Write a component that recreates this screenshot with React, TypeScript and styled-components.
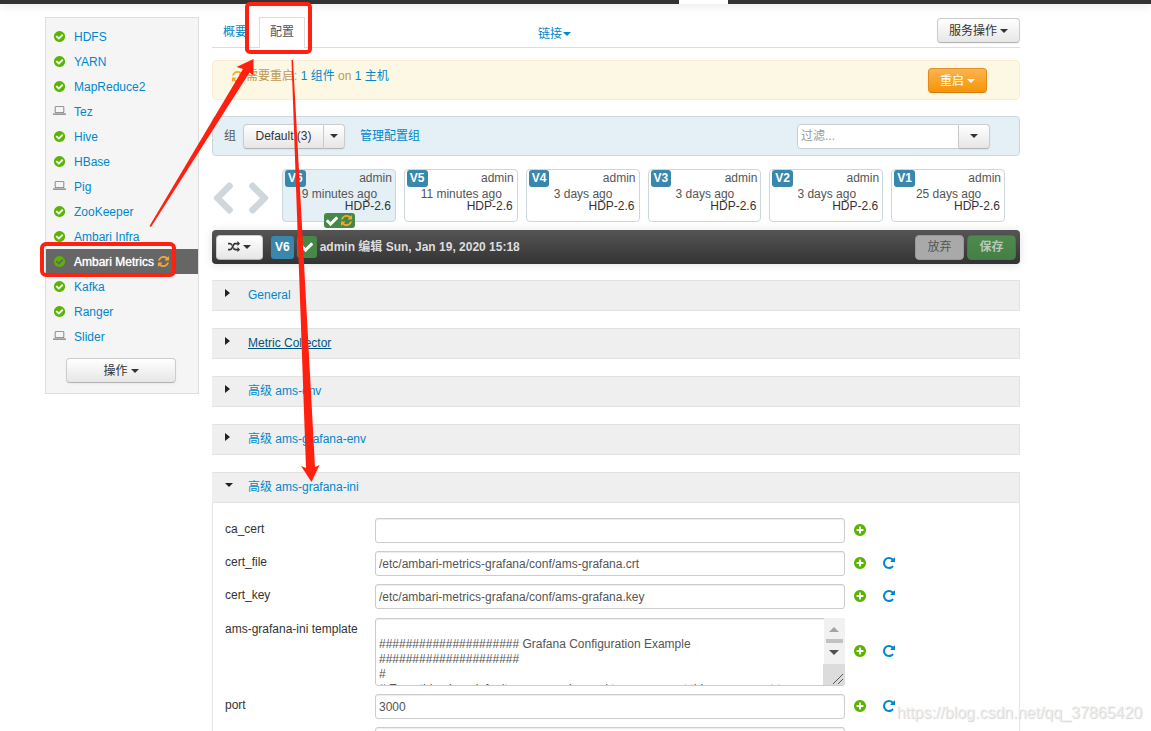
import React from "react";
import styled, { createGlobalStyle, css } from "styled-components";

const GlobalStyle = createGlobalStyle`
  *, *::before, *::after { box-sizing: border-box; }
  body {
    margin: 0;
    background: #fff;
    color: #333;
    font-family: "Liberation Sans", "Noto Sans CJK SC", sans-serif;
    font-size: 12px;
    line-height: 20px;
  }
  button, input, textarea { font: inherit; margin: 0; }
  a { color: #0088cc; text-decoration: none; }
  ul { list-style: none; margin: 0; padding: 0; }
`;

/* ---------- icons ---------- */

const icons = {
  ok: {
    box: "0 0 1792 1792",
    d: "M1412 734q0-28-18-46l-91-90q-19-19-45-19t-45 19l-408 407-226-226q-19-19-45-19t-45 19l-91 90q-18 18-18 46 0 27 18 45l362 362q19 19 45 19 27 0 46-19l543-543q18-18 18-45zm252 162q0 209-103 385.5t-279.5 279.5-385.5 103-385.5-103-279.5-279.5-103-385.5 103-385.5 279.5-279.5 385.5-103 385.5 103 279.5 279.5 103 385.5z",
  },
  plus: {
    box: "0 0 1792 1792",
    d: "M1344 960v-128q0-26-19-45t-45-19h-256v-256q0-26-19-45t-45-19h-128q-26 0-45 19t-19 45v256h-256q-26 0-45 19t-19 45v128q0 26 19 45t45 19h256v256q0 26 19 45t45 19h128q26 0 45-19t19-45v-256h256q26 0 45-19t19-45zm320-64q0 209-103 385.5t-279.5 279.5-385.5 103-385.5-103-279.5-279.5-103-385.5 103-385.5 279.5-279.5 385.5-103 385.5 103 279.5 279.5 103 385.5z",
  },
  refresh: {
    box: "0 0 1792 1792",
    d: "M1639 1056q0 5-1 7-64 268-268 434.5t-478 166.5q-146 0-282.5-55t-243.5-157l-129 129q-19 19-45 19t-45-19-19-45v-448q0-26 19-45t45-19h448q26 0 45 19t19 45-19 45l-137 137q71 66 161 102t187 36q134 0 250-65t186-179q11-17 53-117 8-23 30-23h192q13 0 22.5 9.5t9.5 22.5zm25-800v448q0 26-19 45t-45 19h-448q-26 0-45-19t-19-45 19-45l138-138q-148-137-349-137-134 0-250 65t-186 179q-11 17-53 117-8 23-30 23h-199q-13 0-22.5-9.5t-9.5-22.5v-7q65-268 270-434.5t480-166.5q146 0 284 55.5t245 156.5l130-129q19-19 45-19t45 19 19 45z",
  },
  repeat: {
    box: "0 0 1792 1792",
    d: "M1664 256v448q0 26-19 45t-45 19h-448q-42 0-59-40-17-39 14-69l138-138q-148-137-349-137-104 0-198.5 40.5t-163.5 109.5-109.5 163.5-40.5 198.5 40.5 198.5 109.5 163.5 163.5 109.5 198.5 40.5q119 0 225-52t179-147q7-10 23-12 15 0 25 9l137 138q9 8 9.5 20.5t-7.5 22.5q-109 132-264 204.5t-327 72.5q-156 0-298-61t-245-164-164-245-61-298 61-298 164-245 245-164 298-61q147 0 284.5 55.5t244.5 156.5l130-129q29-31 70-14 39 17 39 59z",
  },
  check: {
    box: "0 0 1792 1792",
    d: "M1671 566q0 40-28 68l-724 724-136 136q-28 28-68 28t-68-28l-136-136-362-362q-28-28-28-68t28-68l136-136q28-28 68-28t68 28l294 295 656-657q28-28 68-28t68 28l136 136q28 28 28 68z",
  },
  random: {
    box: "0 0 1792 1792",
    d: "M666 481q-60 92-137 273-22-45-37-72.5t-40.5-63.5-51-56.5-63-35-81.5-14.5h-224q-14 0-23-9t-9-23v-192q0-14 9-23t23-9h224q250 0 410 225zm1126 799q0 14-9 23l-320 320q-9 9-23 9-13 0-22.5-9.5t-9.5-22.5v-192q-32 0-85 .5t-81 1-73-1-71-5-64-10.5-63-18.5-58-28.5-59-40-55-53.5-56-69.5q59-93 136-273 22 45 37 72.5t40.5 63.5 51 56.5 63 35 81.5 14.5h256v-192q0-14 9-23t23-9q12 0 24 10l319 319q9 9 9 23zm0-896q0 14-9 23l-320 320q-9 9-23 9-13 0-22.5-9.5t-9.5-22.5v-192h-256q-48 0-87 15t-69 45-51 61.5-45 77.5q-32 62-78 171-29 66-49.5 111t-54 105-64 100-74 83-90 68.5-106.5 42-128 16.5h-224q-14 0-23-9t-9-23v-192q0-14 9-23t23-9h224q48 0 87-15t69-45 51-61.5 45-77.5q32-62 78-171 29-66 49.5-111t54-105 64-100 74-83 90-68.5 106.5-42 128-16.5h256v-192q0-14 9-23t23-9q12 0 24 10l319 319q9 9 9 23z",
  },
  laptop: {
    box: "0 0 1920 1792",
    d: "M416 1280q-66 0-113-47t-47-113v-704q0-66 47-113t113-47h1088q66 0 113 47t47 113v704q0 66-47 113t-113 47h-1088zm-32-864v704q0 13 9.500 22.500t22.500 9.500h1088q13 0 22.500-9.500t9.500-22.500v-704q0-13-9.500-22.500t-22.500-9.500h-1088q-13 0-22.500 9.500t-9.500 22.500zm1376 928h160v96q0 40-47 68t-113 28h-1600q-66 0-113-28t-47-68v-96h1760z",
  },
  chevronLeft: {
    box: "0 0 20 32",
    d: "M14.500 1.200a2.600 2.600 0 0 1 3.700 0l.900 1a2.600 2.600 0 0 1 0 3.700L9 16l10.100 10.100a2.600 2.600 0 0 1 0 3.700l-.900 1a2.600 2.600 0 0 1-3.700 0L1.500 17.800a2.600 2.600 0 0 1 0-3.600z",
  },
  chevronRight: {
    box: "0 0 20 32",
    d: "M5.500 1.200a2.600 2.600 0 0 0-3.700 0l-.900 1a2.600 2.600 0 0 0 0 3.700L11 16 .900 26.100a2.600 2.600 0 0 0 0 3.700l.900 1a2.600 2.600 0 0 0 3.700 0l13-13a2.600 2.600 0 0 0 0-3.600z",
  },
};

const Svg = styled.svg<{ $w: number; $h: number }>`
  display: block;
  flex: none;
  width: ${(p) => p.$w}px;
  height: ${(p) => p.$h}px;
  fill: currentColor;
`;

function Icon({ name, w = 14, h = 14 }: { name: keyof typeof icons; w?: number; h?: number }) {
  return (
    <Svg $w={w} $h={h} viewBox={icons[name].box} aria-hidden="true">
      <path d={icons[name].d} />
    </Svg>
  );
}

const Caret = styled.span<{ $side?: boolean }>`
  flex: none;
  width: 0;
  height: 0;
  border: 4px solid transparent;
  ${(p) =>
    p.$side
      ? css`
          border-left: 5px solid currentColor;
          border-right: 0;
        `
      : css`
          border-top-color: currentColor;
          border-bottom: 0;
        `}
`;

/* ---------- page frame ---------- */

const Page = styled.div`
  position: relative;
  height: 100vh;
  overflow: hidden;
`;

const TopBar = styled.header`
  display: flex;
  height: 4px;
  background: #333;
  box-shadow: 0 1px 10px rgba(0, 0, 0, 0.15);
`;

const ActiveMark = styled.span`
  width: 49px;
  margin-left: 59%;
  background: #fff;
`;

const Columns = styled.div`
  display: flex;
  align-items: flex-start;
  gap: 13px;
  padding: 13px 131px 0 45px;
`;

const Sidebar = styled.nav`
  flex: none;
  width: 154px;
  padding: 6px 0 10px;
  background: #f5f5f5;
  border: 1px solid #ddd;
`;

const ServiceLink = styled.a<{ $active?: boolean }>`
  display: flex;
  align-items: center;
  height: 25px;
  padding-left: 7px;
  white-space: nowrap;
  ${(p) =>
    p.$active &&
    css`
      background: #666;
      color: #fff;
      text-shadow: 0 0 1px #fff;
    `}
`;

const StatusSlot = styled.span<{ $client?: boolean }>`
  display: flex;
  width: 21px;
  padding-bottom: ${(p) => (p.$client ? 2 : 0)}px;
  color: ${(p) => (p.$client ? "#777" : "#5ab400")};
`;

const Amber = styled.span<{ $spaced?: boolean }>`
  display: inline-flex;
  margin-left: ${(p) => (p.$spaced ? 3 : 0)}px;
  color: #f9a72b;
`;

const MainArea = styled.main`
  flex: 1;
  min-width: 0;
`;

/* ---------- buttons ---------- */

type Tone = "plain" | "warn" | "muted" | "save";

const tones = {
  plain: css`
    color: #333;
    border-color: #ccc #ccc #b3b3b3;
    background: linear-gradient(#fff, #e6e6e6);
  `,
  warn: css`
    color: #fff;
    border-color: #e59127 #e08a1c #d07c10;
    background: linear-gradient(#fbb450, #f89406);
  `,
  muted: css`
    color: #555;
    border-color: #999;
    background: #a9a9a9;
  `,
  save: css`
    color: #b9c9b9;
    border-color: #447a44;
    background: linear-gradient(#4e8a4e, #457f45);
    font-weight: bold;
  `,
};

const Button = styled.button<{ $tone?: Tone; $width: number; $join?: "left" | "right" }>`
  display: flex;
  align-items: center;
  justify-content: center;
  gap: 3px;
  flex: none;
  width: ${(p) => p.$width}px;
  height: 25px;
  padding: 0;
  border: 1px solid;
  border-radius: 4px;
  white-space: nowrap;
  box-shadow: 0 1px 2px rgba(0, 0, 0, 0.05);
  ${(p) => tones[p.$tone ?? "plain"]}
  ${(p) => p.$join === "left" && "border-radius: 4px 0 0 4px;"}
  ${(p) => p.$join === "right" && "border-radius: 0 4px 4px 0; border-left: 0;"}
`;

const SidebarAction = styled.div`
  display: flex;
  justify-content: center;
  padding: 9px 2px 0 0;
`;

/* ---------- tabs ---------- */

const TabRow = styled.div`
  display: flex;
  align-items: flex-end;
  gap: 1px;
  height: 31px;
  border-bottom: 1px solid #ddd;
`;

const Tab = styled.a<{ $active?: boolean }>`
  height: 30px;
  padding: 4px 10px;
  line-height: 20px;
  border: 1px solid transparent;
  border-bottom: 0;
  ${(p) =>
    p.$active &&
    css`
      height: 31px;
      margin-bottom: -1px;
      color: #555;
      background: #fff;
      border-color: #ddd;
    `}
`;

const QuickLinks = styled.a`
  display: flex;
  align-items: center;
  gap: 1px;
  margin-left: 232px;
  padding-bottom: 3px;
`;

const TabRowEnd = styled.div`
  margin: 0 0 4px auto;
`;

/* ---------- alert and group bar ---------- */

const Alert = styled.section`
  display: flex;
  justify-content: space-between;
  height: 40px;
  margin-top: 12px;
  padding: 7px 32px 0 18px;
  color: #c09853;
  background: #fcf8e3;
  border: 1px solid #fbeed5;
  border-radius: 4px;
`;

const AlertText = styled.p`
  display: flex;
  align-items: center;
  gap: 2px;
  height: 16px;
  margin: 0;
`;

const GroupBar = styled.section`
  display: flex;
  align-items: center;
  height: 40px;
  margin-top: 16px;
  padding: 0 29px 0 11px;
  color: #555;
  background: #e4f0f5;
  border: 1px solid #cdd8dd;
  border-radius: 4px;
`;

const Joined = styled.div<{ $start: number }>`
  display: flex;
  margin-left: ${(p) => p.$start}px;
`;

const ManageLink = styled.a`
  margin: 0 auto 0 15px;
  padding-bottom: 1px;
`;

const FilterInput = styled.input`
  width: 162px;
  height: 25px;
  padding: 0 3px;
  border: 1px solid #ccc;
  border-radius: 4px 0 0 4px;
  background: #fff;
  &::placeholder { color: #999; opacity: 1; }
`;

/* ---------- versions ---------- */

const Versions = styled.section`
  display: flex;
  align-items: center;
  gap: 16px;
  margin-top: 13px;
  padding: 0 15px 0 1px;
`;

const PagerButton = styled.button`
  padding: 4px 0 0;
  border: 0;
  background: none;
  color: #d0d7dc;
`;

const CardGrid = styled.ul`
  display: grid;
  flex: 1;
  grid-template-columns: repeat(6, 1fr);
  gap: 8px;
  margin-left: -3px;
`;

const Card = styled.li<{ $current?: boolean }>`
  position: relative;
  height: 53px;
  border: 1px solid #cdd8dd;
  border-radius: 4px;
  background: ${(p) => (p.$current ? "#e4f0f5" : "#fff")};
  color: #555;
  text-align: center;
`;

const CardTop = styled.div`
  display: flex;
  justify-content: space-between;
  height: 17px;
  padding: 0 3px 0 2px;
  line-height: 16px;
`;

const VersionTag = styled.span<{ $large?: boolean }>`
  padding: 0 3px;
  border-radius: 3px;
  background: #3a87ad;
  color: #fff;
  font-weight: bold;
  line-height: 16px;
  ${(p) =>
    p.$large &&
    css`
      padding: 0 4px;
      line-height: 23px;
    `}
`;

const CardAge = styled.div`
  height: 12px;
  padding-left: 1px;
  line-height: 14px;
`;

const CardStack = styled.div`
  padding-right: 4px;
  line-height: 14px;
  color: #333;
  text-align: right;
`;

const CardState = styled.span`
  position: absolute;
  bottom: -7px;
  left: 50%;
  display: flex;
  align-items: center;
  justify-content: center;
  gap: 1px;
  width: 31px;
  height: 15px;
  margin-left: -15px;
  border-radius: 3px;
  background: #468847;
  color: #fff;
`;

const VersionBar = styled.section`
  display: flex;
  align-items: center;
  height: 34px;
  margin-top: 8px;
  padding: 0 4px;
  background: linear-gradient(#555, #333);
  border-radius: 4px;
  box-shadow: 0 1px 10px rgba(0, 0, 0, 0.12);
  color: #ddd;
  font-weight: bold;
`;

const BarTags = styled.div`
  display: flex;
  align-items: center;
  gap: 3px;
  margin: 0 auto 0 8px;
`;

const AppliedTag = styled.span`
  display: flex;
  align-items: center;
  justify-content: center;
  width: 20px;
  height: 22px;
  border-radius: 3px;
  background: #468847;
  color: #fff;
`;

const BarActions = styled.div`
  display: flex;
  gap: 3px;
  font-weight: normal;
`;

/* ---------- accordion and form ---------- */

const Accordion = styled.div`
  display: flex;
  flex-direction: column;
  gap: 17px;
  margin-top: 16px;
`;

const PanelHeader = styled.div`
  display: flex;
  align-items: center;
  height: 31px;
  padding: 0 0 2px 12px;
  background: #efefef;
  border: 1px solid #e2e2e2;
  border-left-color: #efefef;
  color: #222;
`;

const CaretSlot = styled.span`
  display: flex;
  width: 23px;
  padding-bottom: 3px;
`;

const PanelLink = styled.a<{ $hover?: boolean }>`
  ${(p) => p.$hover && "color: #005580; text-decoration: underline;"}
`;

const PanelBody = styled.form`
  display: flex;
  flex-direction: column;
  gap: 8px;
  padding: 15px 12px;
  border: 1px solid #e5e5e5;
  border-top: 0;
`;

const Field = styled.div<{ $tall?: boolean }>`
  display: flex;
  align-items: ${(p) => (p.$tall ? "flex-start" : "center")};
  padding-top: ${(p) => (p.$tall ? 1 : 0)}px;
`;

const FieldLabel = styled.label`
  flex: none;
  width: 150px;
  height: 25px;
  line-height: 23px;
`;

const controlStyle = css`
  display: block;
  width: 100%;
  border: 1px solid #ccc;
  border-radius: 3px;
  background: #fff;
  color: #555;
  box-shadow: inset 0 1px 1px rgba(0, 0, 0, 0.075);
`;

const ControlSlot = styled.div`
  position: relative;
  flex: 0 1 470px;
`;

const TextInput = styled.input`
  ${controlStyle}
  height: 25px;
  padding: 0 3px;
`;

const TemplateInput = styled.textarea`
  ${controlStyle}
  height: 68px;
  padding: 3px 24px 0 3px;
  line-height: 15px;
  overflow: hidden;
  resize: none;
`;

const ScrollRail = styled.svg`
  position: absolute;
  top: 0;
  right: 0;
  width: 22px;
  height: 68px;
`;

const FieldActions = styled.div`
  display: flex;
  align-items: center;
  align-self: center;
  gap: 15px;
  margin-left: 8px;
`;

const IconButton = styled.button<{ $color: string }>`
  padding: 0 0 2px;
  border: 0;
  background: none;
  color: ${(p) => p.$color};
`;

/* ---------- overlays ---------- */

const Markup = styled.svg`
  position: absolute;
  top: 0;
  left: 0;
  width: 400px;
  height: 500px;
  pointer-events: none;
`;

const Watermark = styled.span`
  position: absolute;
  right: 9px;
  bottom: 8px;
  color: rgba(240, 240, 240, 0.8);
  font-size: 16px;
  text-shadow: 1px 1px 1px rgba(0, 0, 0, 0.18);
`;

/* ---------- data ---------- */

const services = [
  { name: "HDFS" },
  { name: "YARN" },
  { name: "MapReduce2" },
  { name: "Tez", client: true },
  { name: "Hive" },
  { name: "HBase" },
  { name: "Pig", client: true },
  { name: "ZooKeeper" },
  { name: "Ambari Infra" },
  { name: "Ambari Metrics", active: true },
  { name: "Kafka" },
  { name: "Ranger" },
  { name: "Slider", client: true },
];

const versions = [
  { tag: "V6", age: "9 minutes ago", current: true },
  { tag: "V5", age: "11 minutes ago" },
  { tag: "V4", age: "3 days ago" },
  { tag: "V3", age: "3 days ago" },
  { tag: "V2", age: "3 days ago" },
  { tag: "V1", age: "25 days ago" },
];

const closedPanels = [
  { title: "General" },
  { title: "Metric Collector", hover: true },
  { title: "高级 ams-env" },
  { title: "高级 ams-grafana-env" },
];

const template = `##################### Grafana Configuration Example #####################
#
# Everything has defaults so you only need to uncomment things you want to
# change`;

type FieldData = { id: string; label?: string; value: string; fresh?: boolean; tall?: boolean };

const fields: FieldData[] = [
  { id: "ca_cert", label: "ca_cert", value: "", fresh: true },
  { id: "cert_file", label: "cert_file", value: "/etc/ambari-metrics-grafana/conf/ams-grafana.crt" },
  { id: "cert_key", label: "cert_key", value: "/etc/ambari-metrics-grafana/conf/ams-grafana.key" },
  { id: "template", label: "ams-grafana-ini template", value: "\n" + template, tall: true },
  { id: "port", label: "port", value: "3000" },
  { id: "extra", value: "" },
];

export default function App() {
  return (
    <>
      <GlobalStyle />
      <Page>
        <TopBar>
          <ActiveMark />
        </TopBar>
        <Columns>
          <Sidebar>
            <ul>
              {services.map((s) => (
                <li key={s.name}>
                  <ServiceLink href="#" $active={s.active}>
                    <StatusSlot $client={s.client}>
                      <Icon name={s.client ? "laptop" : "ok"} w={13} h={13} />
                    </StatusSlot>
                    {s.name}
                    {s.active && (
                      <Amber $spaced>
                        <Icon name="refresh" w={13} h={13} />
                      </Amber>
                    )}
                  </ServiceLink>
                </li>
              ))}
            </ul>
            <SidebarAction>
              <Button type="button" $width={110}>
                操作
                <Caret />
              </Button>
            </SidebarAction>
          </Sidebar>

          <MainArea>
            <TabRow>
              <Tab href="#">概要</Tab>
              <Tab href="#" $active>
                配置
              </Tab>
              <QuickLinks href="#">
                链接
                <Caret />
              </QuickLinks>
              <TabRowEnd>
                <Button type="button" $width={83}>
                  服务操作
                  <Caret />
                </Button>
              </TabRowEnd>
            </TabRow>

            <Alert>
              <AlertText>
                <Amber>
                  <Icon name="refresh" w={13} h={13} />
                </Amber>
                <span>
                  需要重启: <a href="#">1 组件</a> on <a href="#">1 主机</a>
                </span>
              </AlertText>
              <Button type="button" $tone="warn" $width={59}>
                重启
                <Caret />
              </Button>
            </Alert>

            <GroupBar>
              组
              <Joined $start={7}>
                <Button type="button" $width={81} $join="left">
                  Default (3)
                </Button>
                <Button type="button" $width={21} $join="right" aria-label="选择组">
                  <Caret />
                </Button>
              </Joined>
              <ManageLink href="#">管理配置组</ManageLink>
              <Joined $start={0}>
                <FilterInput type="text" placeholder="过滤..." aria-label="过滤" />
                <Button type="button" $width={31} $join="right" aria-label="过滤选项">
                  <Caret />
                </Button>
              </Joined>
            </GroupBar>

            <Versions>
              <PagerButton type="button" aria-label="上一页">
                <Icon name="chevronLeft" w={20} h={32} />
              </PagerButton>
              <PagerButton type="button" aria-label="下一页">
                <Icon name="chevronRight" w={20} h={32} />
              </PagerButton>
              <CardGrid>
                {versions.map((v) => (
                  <Card key={v.tag} $current={v.current}>
                    <CardTop>
                      <VersionTag>{v.tag}</VersionTag>
                      admin
                    </CardTop>
                    <CardAge>{v.age}</CardAge>
                    <CardStack>HDP-2.6</CardStack>
                    {v.current && (
                      <CardState>
                        <Icon name="check" />
                        <Amber>
                          <Icon name="refresh" w={13} h={13} />
                        </Amber>
                      </CardState>
                    )}
                  </Card>
                ))}
              </CardGrid>
            </Versions>

            <VersionBar>
              <Button type="button" $width={47} aria-label="比较">
                <Icon name="random" w={12} h={12} />
                <Caret />
              </Button>
              <BarTags>
                <VersionTag $large>V6</VersionTag>
                <AppliedTag>
                  <Icon name="check" />
                </AppliedTag>
                <span>admin 编辑 Sun, Jan 19, 2020 15:18</span>
              </BarTags>
              <BarActions>
                <Button type="button" $tone="muted" $width={49}>
                  放弃
                </Button>
                <Button type="button" $tone="save" $width={49}>
                  保存
                </Button>
              </BarActions>
            </VersionBar>

            <Accordion>
              {closedPanels.map((p) => (
                <PanelHeader key={p.title}>
                  <CaretSlot>
                    <Caret $side />
                  </CaretSlot>
                  <PanelLink href="#" $hover={p.hover}>
                    {p.title}
                  </PanelLink>
                </PanelHeader>
              ))}
              <section>
                <PanelHeader>
                  <CaretSlot>
                    <Caret />
                  </CaretSlot>
                  <PanelLink href="#">高级 ams-grafana-ini</PanelLink>
                </PanelHeader>
                <PanelBody>
                  {fields.map((f) => (
                    <Field key={f.id} $tall={f.tall}>
                      <FieldLabel htmlFor={f.id}>{f.label}</FieldLabel>
                      <ControlSlot>
                        {f.tall ? (
                          <>
                            <TemplateInput id={f.id} defaultValue={f.value} />
                            <ScrollRail viewBox="0 0 22 68" aria-hidden="true">
                              <path d="M1 0h21v46H1z" fill="#f1f1f1" />
                              <path d="M6 14l5-5 5 5z" fill="#a3a3a3" />
                              <path d="M3 21h17v4H3z" fill="#c1c1c1" />
                              <path d="M6 32h10l-5 5z" fill="#505050" />
                              <path d="M0 46h22v21H0z" fill="#dcdcdc" />
                              <path d="M10 66l10-10M15 66l5-5" stroke="#555" fill="none" />
                            </ScrollRail>
                          </>
                        ) : (
                          <TextInput
                            id={f.id}
                            type="text"
                            defaultValue={f.value}
                            aria-label={f.label ? undefined : f.id}
                          />
                        )}
                      </ControlSlot>
                      <FieldActions>
                        <IconButton type="button" $color="#5ab400" aria-label="添加">
                          <Icon name="plus" />
                        </IconButton>
                        {!f.fresh && (
                          <IconButton type="button" $color="#0088cc" aria-label="还原">
                            <Icon name="repeat" />
                          </IconButton>
                        )}
                      </FieldActions>
                    </Field>
                  ))}
                </PanelBody>
              </section>
            </Accordion>
          </MainArea>
        </Columns>

        <Markup viewBox="0 0 400 500" aria-hidden="true">
          <g fill="none" stroke="#ff2010" strokeWidth="4">
            <rect x="247" y="4" width="63" height="48" rx="3" />
            <rect x="42" y="244" width="132" height="31" rx="4" />
          </g>
          <g fill="#ff2010">
            <path d="M149.500 226L243 69L236.500 67L253.500 59L253.500 75.500L249.500 72.500L151 227z" />
            <path d="M291.500 60L293 60L315 467L319.500 465L311.500 482L301 466L306 468z" />
          </g>
        </Markup>
        <Watermark>https://blog.csdn.net/qq_37865420</Watermark>
      </Page>
    </>
  );
}
